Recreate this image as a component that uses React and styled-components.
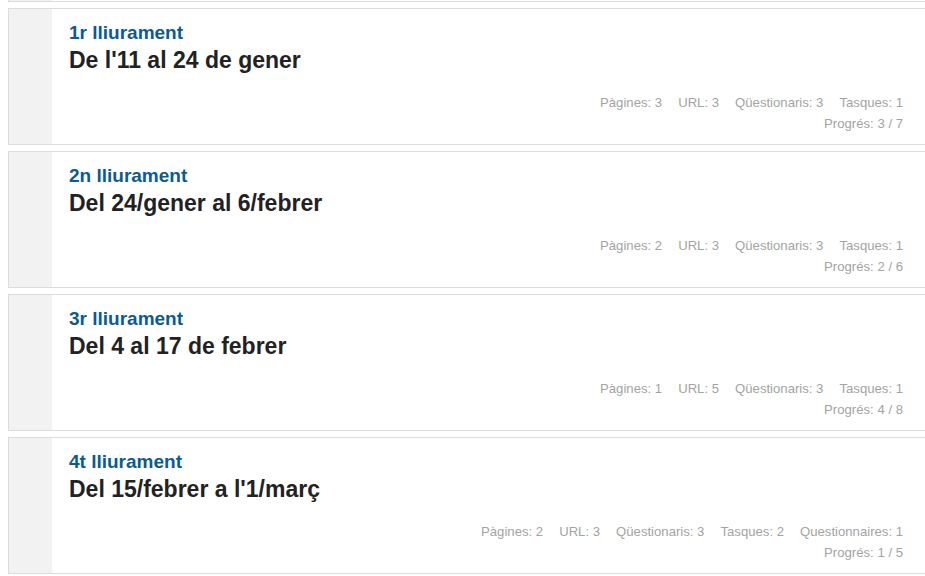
import React from "react";
import styled, { createGlobalStyle } from "styled-components";

const Global = createGlobalStyle`
  html, body { overflow: hidden; }
  body {
    margin: 0 0 0 8px;
    background: #fff;
    font-family: "Liberation Sans", Arial, Helvetica, sans-serif;
  }
`;

const List = styled.div`
  display: flex;
  flex-direction: column;
  gap: 6px;
`;

const Card = styled.section`
  display: flex;
  border: 1px solid #dcdcdc;
  border-right: none;
  border-top: ${(p) => (p.$stub ? "none" : "1px solid #dcdcdc")};
  background: #fff;
  height: ${(p) => (p.$stub ? "2px" : "137px")};
  box-sizing: border-box;
`;

const Side = styled.div`
  width: 43px;
  flex: none;
  background: #f2f2f2;
`;

const Body = styled.div`
  flex: 1;
  display: flex;
  flex-direction: column;
  padding: 13px 22px 10px 17px;
  min-width: 0;
`;

const Kicker = styled.h3`
  margin: 0;
  font-size: 19px;
  line-height: 21px;
  font-weight: 700;
  color: #0b5a91;
`;

const Title = styled.h2`
  margin: 4px 0 0;
  font-size: 23px;
  line-height: 26px;
  font-weight: 700;
  color: #222;
`;

const Stats = styled.div`
  margin-top: ${(p) => (p.$push ? "auto" : "0")};
  display: flex;
  justify-content: flex-end;
  gap: 16px;
  font-size: 13.15px;
  line-height: 21px;
  color: #a3a3a3;
`;

const items = [
  {
    kicker: "1r lliurament",
    title: "De l'11 al 24 de gener",
    stats: ["Pàgines: 3", "URL: 3", "Qüestionaris: 3", "Tasques: 1"],
    progress: "Progrés: 3 / 7",
  },
  {
    kicker: "2n lliurament",
    title: "Del 24/gener al 6/febrer",
    stats: ["Pàgines: 2", "URL: 3", "Qüestionaris: 3", "Tasques: 1"],
    progress: "Progrés: 2 / 6",
  },
  {
    kicker: "3r lliurament",
    title: "Del 4 al 17 de febrer",
    stats: ["Pàgines: 1", "URL: 5", "Qüestionaris: 3", "Tasques: 1"],
    progress: "Progrés: 4 / 8",
  },
  {
    kicker: "4t lliurament",
    title: "Del 15/febrer a l'1/març",
    stats: [
      "Pàgines: 2",
      "URL: 3",
      "Qüestionaris: 3",
      "Tasques: 2",
      "Questionnaires: 1",
    ],
    progress: "Progrés: 1 / 5",
  },
];

export default function App() {
  return (
    <>
      <Global />
      <List>
        <Card $stub aria-hidden="true">
          <Side />
        </Card>
        {items.map((it) => (
          <Card key={it.kicker}>
            <Side />
            <Body>
              <Kicker>{it.kicker}</Kicker>
              <Title>{it.title}</Title>
              <Stats $push>
                {it.stats.map((s) => (
                  <span key={s}>{s}</span>
                ))}
              </Stats>
              <Stats>
                <span>{it.progress}</span>
              </Stats>
            </Body>
          </Card>
        ))}
      </List>
    </>
  );
}
